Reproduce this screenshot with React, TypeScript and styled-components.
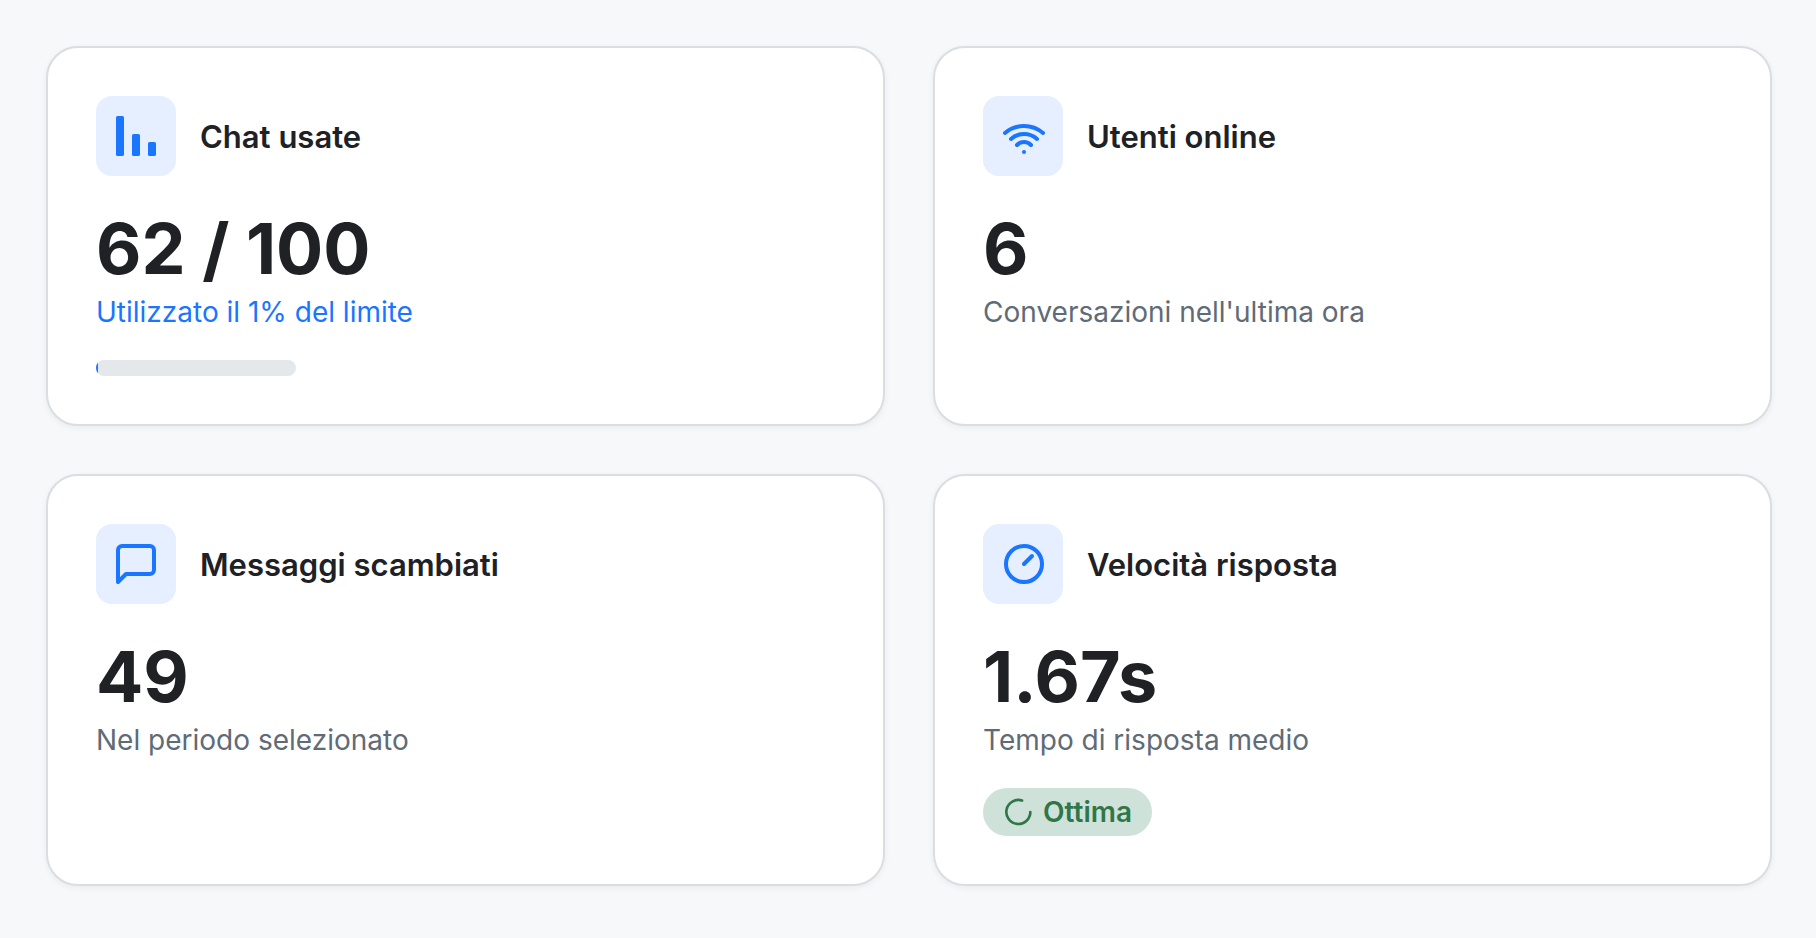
import React from "react";
import styled, { createGlobalStyle } from "styled-components";

const GlobalStyle = createGlobalStyle`
  *, *::before, *::after { box-sizing: border-box; }
  body {
    margin: 0;
    background: #f6f8fa;
    color: #202124;
    font-family: Inter, "Liberation Sans", sans-serif;
    -webkit-font-smoothing: antialiased;
  }
`;

const Grid = styled.main`
  display: grid;
  grid-template-columns: repeat(2, minmax(0, 1fr));
  gap: 48px;
  padding: 46px 44px 48px 46px;
`;

const Card = styled.section`
  padding: 48px;
  border: 2px solid #dadde2;
  border-radius: 32px;
  background: #fff;
  box-shadow: 0 2px 6px rgba(32, 33, 36, 0.06);
`;

const CardHeader = styled.header`
  display: flex;
  align-items: center;
  gap: 24px;
  margin-bottom: 32px;
`;

const IconTile = styled.span`
  display: flex;
  align-items: center;
  justify-content: center;
  width: 80px;
  height: 80px;
  border-radius: 16px;
  background: #e5efff;
  color: #1a75ff;
`;

const Title = styled.h2`
  margin: 0;
  padding-top: 2px;
  font-size: 31px;
  font-weight: 600;
  line-height: 40px;
`;

const Value = styled.p`
  margin: 0 0 2px;
  font-size: 70px;
  font-weight: 700;
  line-height: 82px;
`;

const Caption = styled.p<{ $accent?: boolean }>`
  margin: 0;
  font-size: 28px;
  line-height: 40px;
  color: ${({ $accent }) => ($accent ? "#1a75ff" : "#5f6b76")};
`;

const Track = styled.div`
  width: 200px;
  height: 16px;
  margin-top: 28px;
  border-radius: 8px;
  overflow: hidden;
  background: #e4e8eb;
`;

const Fill = styled.div`
  height: 100%;
  background: #1a75ff;
`;

const Badge = styled.span`
  display: flex;
  align-items: center;
  gap: 8px;
  width: fit-content;
  height: 48px;
  margin-top: 28px;
  padding: 0 20px;
  border-radius: 24px;
  background: #cfe2d9;
  color: #2f774b;
  font-size: 28px;
  font-weight: 600;
`;

const Icon = ({ size = 48, children }: { size?: number; children: React.ReactNode }) => (
  <svg
    width={size}
    height={size}
    viewBox="0 0 24 24"
    fill="none"
    stroke="currentColor"
    strokeWidth="2"
    strokeLinecap="round"
    strokeLinejoin="round"
    aria-hidden="true"
  >
    {children}
  </svg>
);

const BarsIcon = () => (
  <Icon>
    <g fill="currentColor" stroke="none">
      <rect x="2" y="2" width="4" height="20" rx="0.8" />
      <rect x="10" y="11" width="4" height="11" rx="0.8" />
      <rect x="18" y="15" width="4" height="7" rx="0.8" />
    </g>
  </Icon>
);

const WifiIcon = () => (
  <Icon>
    <path d="M3 10.5a14.64 14.64 0 0 1 19 0" />
    <path d="M6 13.5a9.7 9.7 0 0 1 13 0" />
    <path d="M9 16.5a4.83 4.83 0 0 1 7 0" />
    <circle cx="12.5" cy="20" r="1" fill="currentColor" stroke="none" />
  </Icon>
);

const MessageIcon = () => (
  <Icon>
    <path d="M21 15a2 2 0 0 1-2 2H7l-4 4V5a2 2 0 0 1 2-2h14a2 2 0 0 1 2 2z" />
  </Icon>
);

const GaugeIcon = () => (
  <Icon>
    <circle cx="12.5" cy="12" r="9" />
    <path d="M12.5 12l4-4" />
  </Icon>
);

const RingIcon = () => (
  <Icon size={32}>
    <path d="M20.5 12a9 9 0 1 1-6.219-8.56" />
  </Icon>
);

interface StatCardProps {
  icon: React.ReactNode;
  title: string;
  value: string;
  caption: string;
  accent?: boolean;
  children?: React.ReactNode;
}

const StatCard = ({ icon, title, value, caption, accent, children }: StatCardProps) => (
  <Card>
    <CardHeader>
      <IconTile>{icon}</IconTile>
      <Title>{title}</Title>
    </CardHeader>
    <Value>{value}</Value>
    <Caption $accent={accent}>{caption}</Caption>
    {children}
  </Card>
);

const usedPercent = 1;

export default function App() {
  return (
    <>
      <GlobalStyle />
      <Grid>
        <StatCard
          icon={<BarsIcon />}
          title="Chat usate"
          value="62 / 100"
          caption={`Utilizzato il ${usedPercent}% del limite`}
          accent
        >
          <Track
            role="progressbar"
            aria-label="Chat usate"
            aria-valuemin={0}
            aria-valuemax={100}
            aria-valuenow={usedPercent}
          >
            <Fill style={{ width: `${usedPercent}%` }} />
          </Track>
        </StatCard>
        <StatCard
          icon={<WifiIcon />}
          title="Utenti online"
          value="6"
          caption="Conversazioni nell'ultima ora"
        />
        <StatCard
          icon={<MessageIcon />}
          title="Messaggi scambiati"
          value="49"
          caption="Nel periodo selezionato"
        />
        <StatCard
          icon={<GaugeIcon />}
          title="Velocità risposta"
          value="1.67s"
          caption="Tempo di risposta medio"
        >
          <Badge>
            <RingIcon />
            Ottima
          </Badge>
        </StatCard>
      </Grid>
    </>
  );
}
